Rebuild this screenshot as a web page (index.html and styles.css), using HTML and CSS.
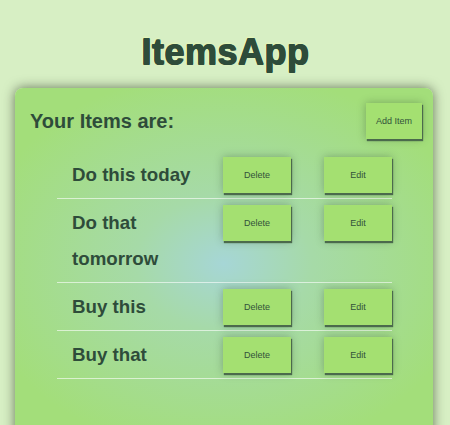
FILE: index.html
```html
<!DOCTYPE html>
<html lang="en">
<head>
<meta charset="utf-8">
<title>ItemsApp</title>
<link rel="stylesheet" href="styles.css">
</head>
<body>
  <h1 class="app-title">ItemsApp</h1>
  <section class="card">
    <div class="card-head">
      <h2 class="card-title">Your Items are:</h2>
      <button class="btn btn-add">Add Item</button>
    </div>
    <ul class="items">
      <li class="item">
        <span class="item-text">Do this today</span>
        <button class="btn">Delete</button>
        <button class="btn btn-edit">Edit</button>
      </li>
      <li class="item">
        <span class="item-text">Do that tomorrow</span>
        <button class="btn">Delete</button>
        <button class="btn btn-edit">Edit</button>
      </li>
      <li class="item">
        <span class="item-text">Buy this</span>
        <button class="btn">Delete</button>
        <button class="btn btn-edit">Edit</button>
      </li>
      <li class="item">
        <span class="item-text">Buy that</span>
        <button class="btn">Delete</button>
        <button class="btn btn-edit">Edit</button>
      </li>
    </ul>
  </section>
</body>
</html>
```
FILE: styles.css
```css
html, body {
  margin: 0;
  padding: 0;
}
body {
  background: #d7efc4;
  font-family: "Liberation Sans", Arial, sans-serif;
  color: #2e4c3a;
  padding: 0 15px 0 15px;
  overflow: hidden;
  height: 425px;
  box-sizing: border-box;
}
.app-title {
  margin: 0;
  padding-top: 31px;
  height: 88px;
  box-sizing: border-box;
  text-align: center;
  font-size: 36px;
  line-height: 41px;
  font-weight: bold;
  letter-spacing: 0.5px;
  color: #2e4c3a;
  text-shadow: 1px 0 0 #2e4c3a, 0 1px 0 #2e4c3a, 1px 1px 0 #2e4c3a, 0 0 3px #f0ffb0, 0 0 2px #f0ffb0;
}
.card {
  width: 418px;
  box-sizing: border-box;
  border-radius: 8px;
  background: radial-gradient(ellipse 60% 55% at 50% 50%, #a6d6d6 0%, #a6daa8 35%, #a3de7a 100%);
  box-shadow: 0 0 12px rgba(40, 50, 30, 0.65);
  padding: 15px 11px 60px 15px;
}
.card-head {
  display: flex;
  align-items: center;
  justify-content: space-between;
  height: 36px;
}
.card-title {
  margin: 0;
  font-size: 20px;
  font-weight: bold;
  color: #2e4c3a;
}
.btn {
  font-family: "Liberation Sans", Arial, sans-serif;
  font-size: 9px;
  color: #33523a;
  background: #a4e071;
  border: none;
  width: 68px;
  height: 36px;
  padding: 0;
  flex: none;
  box-shadow: 1px 2px 1px #4b6a4c, 0 0 8px rgba(40, 60, 40, 0.35);
}
.btn-add {
  width: 56px;
}
.items {
  list-style: none;
  margin: 12px 30px 0 27px;
  padding: 0;
}
.item {
  display: flex;
  align-items: flex-start;
  padding: 6px 0 5px 15px;
  border-bottom: 1px solid rgba(255, 255, 255, 0.6);
}
.item-text {
  width: 151px;
  flex: none;
  font-size: 18.72px;
  font-weight: bold;
  line-height: 36px;
  color: #2e4c3a;
}
.btn-edit {
  margin-left: 33px;
}
```
